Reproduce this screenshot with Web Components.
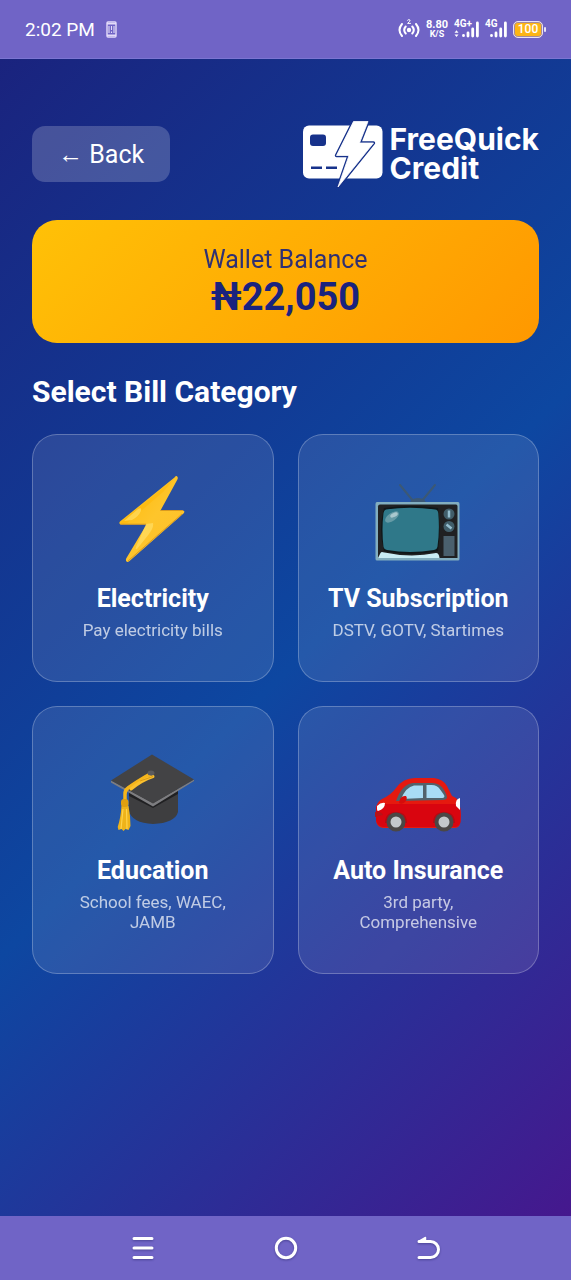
<!DOCTYPE html>
<html lang="en">
<head>
<meta charset="utf-8">
<meta name="viewport" content="width=device-width, initial-scale=1">
<title>FreeQuick Credit - Bills</title>
<style>
body {
    margin: 0;
    font-family: Roboto, "Liberation Sans", sans-serif;
    color: #fff;
}
</style>
</head>
<body>
<bills-app></bills-app>

<script>
function makeTemplate(html) {
    let template = document.createElement("template");
    template.innerHTML = html;
    return template;
}

class BaseElement extends HTMLElement {
    constructor() {
        super();
        this.attachShadow({mode: "open"});
        this.shadowRoot.appendChild(this.constructor.template.content.cloneNode(true));
    }
}

class StatusBar extends BaseElement {
    static template = makeTemplate(`
<style>
:host {
    display: flex;
    align-items: center;
    justify-content: space-between;
    box-sizing: border-box;
    height: 59px;
    padding: 0 25px;
    background: #7064c6;
    border-bottom: 1px solid #7b75d2;
}
.group {
    display: flex;
    align-items: center;
    gap: 6px;
}
.left {
    gap: 11px;
    font-size: 19px;
}
.speed {
    font-size: 11px;
    font-weight: 700;
    line-height: 11px;
    text-align: center;
}
.speed small {
    display: block;
    font-size: 9px;
    line-height: 9px;
}
.battery {
    display: flex;
    align-items: center;
    gap: 1px;
}
.level {
    box-sizing: border-box;
    width: 30px;
    height: 17px;
    border: 1px solid #e9e2f5;
    border-radius: 5px;
    background: #fdb515;
    box-shadow: inset 0 0 0 1px #a58a9c;
    font-size: 12px;
    font-weight: 500;
    line-height: 15px;
    text-align: center;
}
.tip {
    width: 2px;
    height: 5px;
    border-radius: 1px;
    background: #e9e2f5;
}
svg {
    display: block;
}
</style>
<div class="group left">
    <span>2:02 PM</span>
    <svg width="11" height="17" viewBox="0 0 11 17" fill="none" stroke="#e4dcfa">
        <rect x="1" y="1" width="9" height="15" rx="1" stroke-width="1.4"/>
        <path d="M1 2.7h9M1 14.3h9" stroke-width="1.4"/>
        <path d="M3 5v7M8 5v7M5.5 5v4M5.5 10.5v1.5" stroke-width="1.1"/>
    </svg>
</div>
<div class="group">
    <svg width="22" height="22" viewBox="0 0 22 22" fill="none" stroke="#fff" stroke-width="2" stroke-linecap="round">
        <circle cx="11" cy="12" r="2.2" fill="#fff" stroke="none"/>
        <path d="M7.7 8.5q-3 3.5 0 7M14.3 8.5q3 3.5 0 7M4 6q-5 6 0 12M18 6q5 6 0 12"/>
        <path d="M9.6 2.2q1.3-1.4 2.5 0 .4.8-2.5 3.2h2.9" stroke-width="1"/>
    </svg>
    <div class="speed">8.80<small>K/S</small></div>
    <signal-meter plus>4G+</signal-meter>
    <signal-meter>4G</signal-meter>
    <div class="battery"><div class="level">100</div><div class="tip"></div></div>
</div>
`);
}

class SignalMeter extends BaseElement {
    static template = makeTemplate(`
<style>
:host {
    display: grid;
    width: 22px;
    height: 20px;
    font-size: 10px;
    font-weight: 700;
    line-height: 10px;
}
:host([plus]) {
    width: 25px;
}
span, svg {
    grid-area: 1 / 1;
}
svg {
    justify-self: end;
}
.arrows {
    display: none;
    justify-self: start;
}
:host([plus]) .arrows {
    display: block;
}
</style>
<span><slot></slot></span>
<svg width="17" height="19" viewBox="0 0 17 19" fill="none" stroke="#fff" stroke-width="2.8" stroke-linecap="round">
    <path d="M1.5 16.5v.2M6 14v3M10.7 10v7M15.4 4v13"/>
</svg>
<svg class="arrows" width="5" height="19" viewBox="0 0 5 19" fill="#fff">
    <path d="M.5 13.8l2-2.6 2 2.6zM.5 15.5l2 2.6 2-2.6z"/>
</svg>
`);
}

class NavBar extends BaseElement {
    static template = makeTemplate(`
<style>
:host {
    display: flex;
    align-items: center;
    height: 64px;
    padding: 0 12.5%;
    background: #7064c6;
}
button {
    display: grid;
    flex: 1;
    place-items: center;
    padding: 0;
    border: 0;
    background: none;
    cursor: pointer;
}
svg {
    display: block;
    filter: drop-shadow(0 1px 1px #4b4496);
}
</style>
<button aria-label="Recent apps">
    <svg width="24" height="24" viewBox="0 0 24 24" stroke="#fff" stroke-width="3" stroke-linecap="round">
        <path d="M3 2.5h18M3 12h18M3 21.5h18"/>
    </svg>
</button>
<button aria-label="Home">
    <svg width="24" height="24" viewBox="0 0 24 24" fill="none" stroke="#fff" stroke-width="3">
        <circle cx="12" cy="12" r="9.7"/>
    </svg>
</button>
<button aria-label="Back">
    <svg width="24" height="24" viewBox="0 0 24 24" fill="none" stroke="#fff" stroke-width="3" stroke-linecap="round" stroke-linejoin="round">
        <path d="M3 5.5h11.500a8 8 0 0 1 0 16H3"/>
        <path d="M3 5.200l6.500-3.700v3.700z" stroke-width="1.500" fill="#fff"/>
    </svg>
</button>
`);
}

class BrandLogo extends BaseElement {
    static template = makeTemplate(`
<style>
:host {
    display: flex;
    align-items: center;
    gap: 6px;
    height: 68px;
    font-family: Inter, Roboto, sans-serif;
    font-size: 30px;
    font-weight: 700;
    line-height: 29px;
}
svg {
    display: block;
}
</style>
<svg width="81" height="68" viewBox="0 0 81 68" stroke-linejoin="round">
    <rect x="0" y="5.500" width="79.500" height="53" rx="6" fill="#fff"/>
    <rect x="7" y="14.500" width="16" height="11.500" rx="3" fill="#17328b"/>
    <path d="M8 47.700h11M23 47.700h11" stroke="#17328b" stroke-width="2.600"/>
    <path id="edge" d="M50.500 1.500H65L56.500 23H70.500L35 67 46 35.500H33.500z" fill="none" stroke="#17328b" stroke-width="3.400"/>
    <path d="M50.500 1.500H65L56.500 23H70.500L35 67 46 35.500H33.500z" fill="#fff" stroke="#fff" stroke-width=".8"/>
</svg>
<div>FreeQuick<br>Credit</div>
`);
}

class WalletCard extends BaseElement {
    static template = makeTemplate(`
<style>
:host {
    display: block;
    padding: 24px;
    border-radius: 25px;
    background: linear-gradient(135deg, #ffc107, #ff9800);
    color: #1a237e;
    text-align: center;
}
.label {
    font-size: 25px;
    line-height: 31px;
    opacity: 0.9;
}
.amount {
    font-size: 38px;
    font-weight: 700;
    line-height: 44px;
}
</style>
<div class="label">Wallet Balance</div>
<div class="amount"><slot></slot></div>
`);
}

class BillCard extends BaseElement {
    static template = makeTemplate(`
<style>
:host {
    display: grid;
}
button {
    display: flex;
    flex-direction: column;
    align-items: center;
    padding: 41px 24px;
    border: 1px solid rgba(255, 255, 255, 0.25);
    border-radius: 25px;
    background: rgba(255, 255, 255, 0.1);
    color: #fff;
    font: inherit;
    cursor: pointer;
}
.title {
    margin: 22px 0 6px;
    font-size: 25px;
    font-weight: 700;
    line-height: 30px;
    white-space: nowrap;
}
.text {
    font-size: 17px;
    line-height: 20px;
    opacity: 0.7;
}
</style>
<button>
    <slot name="icon"></slot>
    <span class="title"><slot name="title"></slot></span>
    <span class="text"><slot></slot></span>
</button>
`);
}

class BillsApp extends BaseElement {
    static template = makeTemplate(`
<style>
:host {
    display: flex;
    flex-direction: column;
    min-height: 100vh;
}
main {
    flex: 1;
    padding: 61px 32px 32px;
    background: linear-gradient(135deg, #1a237e 0%, #0d47a1 52%, #4a148c 104%);
}
header {
    display: flex;
    align-items: center;
    justify-content: space-between;
    margin-bottom: 32px;
}
.back {
    height: 56px;
    padding: 0 26px;
    border: 0;
    border-radius: 13px;
    background: rgba(255, 255, 255, 0.2);
    color: #fff;
    font: inherit;
    font-size: 25px;
    cursor: pointer;
}
h2 {
    margin: 32px 0 25px;
    font-size: 30px;
    font-weight: 700;
    line-height: 34px;
}
.grid {
    display: grid;
    grid-template-columns: 1fr 1fr;
    gap: 24px;
}
.grid svg {
    display: block;
    width: 86px;
    height: 86px;
}
</style>
<status-bar></status-bar>
<main>
    <header>
        <button class="back">← Back</button>
        <brand-logo></brand-logo>
    </header>
    <wallet-card>₦22,050</wallet-card>
    <h2>Select Bill Category</h2>
    <div class="grid">
        <bill-card>
            <svg slot="icon" viewBox="0 0 86 86">
                <defs>
                    <linearGradient id="bolt" x1="0" y1="0" x2="1" y2="1">
                        <stop offset="0" stop-color="#feb804"/>
                        <stop offset="0.5" stop-color="#fec52b"/>
                        <stop offset="1" stop-color="#fdbf2d"/>
                    </linearGradient>
                </defs>
                <g transform="translate(-2)">
                    <path d="M66.500 1.500q2-2.500 3-.5.800 1-.5 3.300L52.500 34.500H75q2.500.5.500 3L21.500 85q-2 1.500-3 .5t-.3-3L38.500 48.500h-26q-2-1-.5-3z" fill="url(#bolt)"/>
                    <path d="M66 3L13 46q-1.500 2 1 2.200l5-1L55 16z" fill="#ffb300" opacity=".4"/>
                    <path d="M16 45L30 33q4-2 3 2-3 6-9 9zM38 48l7-1q1 4-4 11L29 73q-2 1-1-2z" fill="#ffe16a" opacity=".65"/>
                    <path d="M12.500 48.200h25.500M52.500 34.500h22.500M20 85l54-47" fill="none" stroke="#d99a20"/>
                </g>
            </svg>
            <span slot="title">Electricity</span>
            Pay electricity bills
        </bill-card>
        <bill-card>
            <svg slot="icon" viewBox="0 0 86 86">
                <path d="M25 9l14 17M60 9L46 26" stroke="#3b5875" stroke-width="2" stroke-linecap="round"/>
                <path d="M35 28q0-6 8-6t8 6z" fill="#3b5875"/>
                <path d="M2 26h81q1.500 0 1.500 2v55q0 1.500-1.500 1.500H2q-1.500 0-1.500-1.500V28q0-2 1.500-2z" fill="#82aebf"/>
                <path d="M5 28.500h76q1.500 0 1.500 2V82H3V30.500q0-2 2-2z" fill="#202122"/>
                <path d="M3 82l2.500-5q1-1.500 2.500-.7 28 6 53 .7 3 0 3.500 5z" fill="#c9edf5"/>
                <path d="M9 32q27-4 54 0 3 22 0 43-27 6-54 0-6-22 0-43z" fill="#0f1719"/>
                <path d="M11 33.500q24-3.500 49 0 3 0 3.300 4 1.500 17-.8 33-.5 3-3.500 3.500-24 4-47 0-3-.5-3.500-3-2-17 0-34 .4-3 2.500-3.500z" fill="#2f7889"/>
                <ellipse cx="17" cy="41" rx="8" ry="4" transform="rotate(-35 17 41)" fill="#a8c5ca" opacity=".45"/>
                <ellipse cx="19" cy="39" rx="4" ry="2" transform="rotate(-25 19 39)" fill="#d6e6e9" opacity=".6"/>
                <circle cx="74" cy="38" r="5.500" fill="#415e6a"/>
                <circle cx="74" cy="50.500" r="5.500" fill="#415e6a"/>
                <path d="M74 34.500v7M71.500 48.500l5 4" stroke="#95bfd0" stroke-width="2.500"/>
                <rect x="68.500" y="60" width="11" height="20" fill="#4a606d"/>
            </svg>
            <span slot="title">TV Subscription</span>
            DSTV, GOTV, Startimes
        </bill-card>
        <bill-card>
            <svg slot="icon" viewBox="0 0 86 86">
                <path d="M19 41v22q3 12 24 13 22-1 25-12V42L43 54z" fill="#3e3e40"/>
                <path d="M19 48l24 12 25-14v-6L43 53 19 38z" fill="#202022"/>
                <path d="M1 32.500v2L43 58.500 84 33v-1.500L43 55z" fill="#7d7d80"/>
                <path d="M1 32.500L43 55.500 84 31.500 42 6.500z" fill="#434345"/>
                <path d="M41 25.500Q26 34 18 40q-3 2-3 6v9" fill="none" stroke="#f5b51b" stroke-width="3.500" stroke-linecap="round"/>
                <path d="M43 28.500Q32 32 21 41" fill="none" stroke="#fbc02d" stroke-width="3" stroke-linecap="round"/>
                <path d="M30 33L43 28.500" stroke="#d99a16"/>
                <ellipse cx="41" cy="25" rx="3.500" ry="2.500" fill="#5b5b5e"/>
                <path d="M11.500 58q3-3 7 0 2 10 2 20l-2 4-3-1-2 2-2-2-3 1-.8-3q3-9 3.800-21z" fill="#eeb31a"/>
                <path d="M13 61l-2 20M16.500 61l.5 20" stroke="#ffd24a" stroke-width="1.200"/>
                <rect x="11" y="51" width="7.500" height="8" rx="3" fill="#e0a010"/>
            </svg>
            <span slot="title">Education</span>
            School fees, WAEC, JAMB
        </bill-card>
        <bill-card>
            <svg slot="icon" viewBox="0 0 86 86">
                <path d="M7 51q9-4 14-11 7-10 19-10h19q9 1 13 8l5 10q6 2 7 7 3 8 1 21-1 4-6 4H8q-6-1-7-7V59q2-6 6-8z" fill="#e5190f"/>
                <path d="M1 62q0-4 2-6h80q3 0 2.500 18-1 5-6 5H8q-6-1-7-7z" fill="#d9050f"/>
                <path d="M21 53q6-17 17-18h19q8 0 12 7 3 5 3 8-1 2-4 2z" fill="#51626b"/>
                <path d="M26 51q5-12 13-13.500h9V50zM51.500 37h5q6 0 9 5 3 4 4 6 0 2-2 2h-16z" fill="#a8dcf5"/>
                <path d="M24 55q1-8 7-7 2 2-1 6-3 3-6 1z" fill="#d50c0b"/>
                <path d="M2 58q4-4 8-3 0 6-7 8-1 0-1-2zM85 50q-5 1-4 8l4 4z" fill="#fff"/>
                <path d="M0 64q5-2 8 3L0 69z" fill="#b81319"/>
                <path d="M10 75q0-11 11-11t11 11zM58 75q0-11 11-11t11 11z" fill="#b20c14"/>
                <g fill="#4b4745">
                    <circle cx="21" cy="74" r="9.500"/>
                    <circle cx="69" cy="74" r="9.500"/>
                </g>
                <g fill="#c5c8ca">
                    <circle cx="21" cy="74" r="5.500"/>
                    <circle cx="69" cy="74" r="5.500"/>
                </g>
            </svg>
            <span slot="title">Auto Insurance</span>
            3rd party, Comprehensive
        </bill-card>
    </div>
</main>
<nav-bar></nav-bar>
`);
}

window.customElements.define("signal-meter", SignalMeter);
window.customElements.define("status-bar", StatusBar);
window.customElements.define("nav-bar", NavBar);
window.customElements.define("brand-logo", BrandLogo);
window.customElements.define("wallet-card", WalletCard);
window.customElements.define("bill-card", BillCard);
window.customElements.define("bills-app", BillsApp);
</script>
</body>
</html>
